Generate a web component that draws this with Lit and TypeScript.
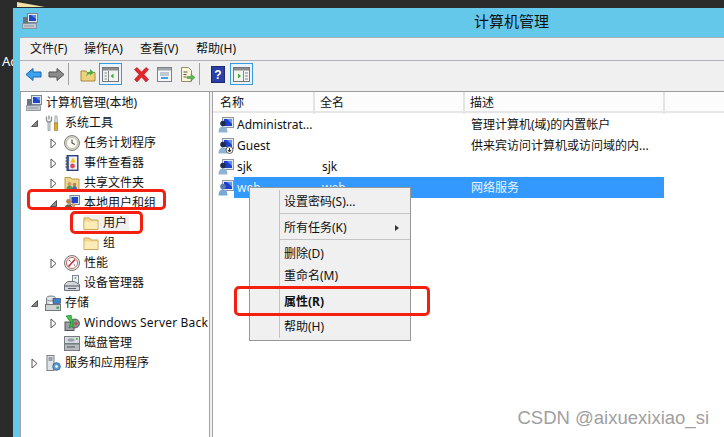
import { LitElement, html, css, svg } from "lit";
import { customElement } from "lit/decorators.js";

const folder = svg`<path d="M1 3h5.500l1.500 2h7v9.500H1z" fill="#f3d98e" stroke="#c9a85a"/><path d="M1.500 6.500h13v7.500h-13z" fill="#fbecb8"/>`;
const computer = svg`<rect x="5.500" y=".5" width="10" height="9" fill="#dfe6ee" stroke="#7c8794"/><rect x="7" y="2" width="7" height="6" fill="#1f45c8"/><path d="M9 2h5v4z" fill="#5f8cf0"/><rect x="1" y="4" width="5" height="8" fill="#6a7480"/><path d="M.5 10.500h14v5H.5z" fill="#c2c8cf" stroke="#7e8791" stroke-width=".8"/><path d="M2.500 13h10" stroke="#59616b" stroke-dasharray="1 1"/>`;
const ICONS: Record<string, unknown> = {
  computer,
  tools: svg`<path d="M4 .5v4M1.500 1.500v3c0 1.800 1 2.500 2.500 2.500s2.500-.7 2.500-2.500v-3" fill="none" stroke="#8a8f96" stroke-width="1.300"/><path d="M3 7h2v8.500H3z" fill="#dcdfe3" stroke="#7e848b" stroke-width=".7"/><path d="M10 1h2l.5 7h-3z" fill="#d9dde1" stroke="#868b92" stroke-width=".6"/><path d="M9.500 8h3v7.500h-3z" fill="#e3ad1e" stroke="#8f6a0f" stroke-width=".6"/>`,
  clock: svg`<circle cx="8" cy="8" r="7.500" fill="#d5d3c8" stroke="#85857a"/><circle cx="8" cy="8" r="5.500" fill="#fbfbf4" stroke="#a8a898" stroke-width=".6"/><path d="M8 4.500V8l2.800 1.400" fill="none" stroke="#4a4a44" stroke-width="1.100"/>`,
  event: svg`<rect x="3" y=".5" width="11" height="15" fill="#4b61a8" stroke="#2f3f78"/><rect x="5" y="1.500" width="8" height="13" fill="#eef0f5"/><path d="M9 2.500l3 5H6z" fill="#f0c41f"/><circle cx="8.500" cy="11" r="2.400" fill="#d9505a"/><path d="M3 3H1.500M3 6H1.500M3 9H1.500M3 12H1.500" stroke="#333"/>`,
  share: svg`<path d="M1 2.500h5.500l1 1.500H15v11H1z" fill="#f0d68a" stroke="#b69a50"/><circle cx="5.500" cy="9" r="2" fill="#c99a6b"/><path d="M2.500 14.500c0-3 1.500-3.900 3-3.900s3 .9 3 3.900z" fill="#4e9a5e"/><circle cx="10.500" cy="9.500" r="1.800" fill="#b98457"/><path d="M8 14.500c0-2.500 1.200-3.500 2.500-3.500s2.500 1 2.500 3.500z" fill="#4668a8"/>`,
  users: svg`<rect x="6" y=".5" width="9.500" height="9" fill="#dfe6ee" stroke="#7c8794"/><rect x="7.500" y="2" width="6.500" height="6" fill="#1f45c8"/><circle cx="4.500" cy="6.500" r="2.400" fill="#b5824f"/><path d="M.5 14c0-3.500 2-4.500 4-4.500s4 1 4 4.500z" fill="#6b5a3c"/><circle cx="9.500" cy="10" r="1.900" fill="#caa06f"/><path d="M6.500 15c0-2.500 1.400-3.200 3-3.200s3 .7 3 3.200z" fill="#7d8c55"/>`,
  folder,
  perf: svg`<circle cx="8" cy="8" r="7.500" fill="#eceae4" stroke="#77776f"/><circle cx="8" cy="8" r="5.500" fill="#fff" stroke="#a33" stroke-width=".7"/><path d="M4.500 11.500L11 4.500" stroke="#c4232b" stroke-width="1.500"/><path d="M5 5l1.500 1.500M11 10.500l-1.200-1" stroke="#444"/>`,
  device: svg`<rect x="8.500" y=".5" width="6" height="8" fill="#eef0f2" stroke="#7e8791"/><circle cx="11.500" cy="3" r="1" fill="#4b6"/><path d="M.5 9.500l3-3h7l5 3v6H.5z" fill="#d2d6da" stroke="#6d747c"/><path d="M.5 11h15" stroke="#4f565e"/><path d="M4 13.500h8" stroke="#596069"/>`,
  storage: svg`<ellipse cx="6" cy="3.500" rx="4.500" ry="2.500" fill="#dfe3e6" stroke="#7a8086"/><path d="M1.500 3.500v6c0 1 2 1.500 4.500 1.500" fill="#cdd2d6" stroke="#7a8086"/><rect x="8" y="3.500" width="7.500" height="5" fill="#3c84c8" stroke="#336"  stroke-width=".6"/><rect x=".5" y="9.500" width="15" height="6" fill="#ced2d5" stroke="#71777d"/><rect x="11.500" y="11.500" width="2.400" height="2.400" fill="#44a648"/>`,
  wsb: svg`<rect x="1" y="7" width="9" height="8.500" fill="#9ba1a6" stroke="#555"/><circle cx="11" cy="8.500" r="4.400" fill="#8f8f92" stroke="#555"/><circle cx="12" cy="8.500" r="1.600" fill="#c0504a"/><path d="M2 1c2 2 2 4 5 6l-2 6 4-2 0-6c-2-1-1-3-2-5z" fill="#3ec24a" stroke="#19792a" stroke-width=".6"/>`,
  disk: svg`<rect x=".5" y="1.500" width="15" height="7" fill="#d8dbde" stroke="#767c82"/><ellipse cx="7" cy="5" rx="3.500" ry="1.700" fill="#9aa1a8"/><rect x=".5" y="9" width="15" height="6.500" fill="#b7bbbf" stroke="#767c82"/><path d="M3 12h8" stroke="#555"/><rect x="12" y="3" width="1.600" height="1.600" fill="#4a4"/>`,
  services: svg`<rect x="2" y=".5" width="7" height="15" fill="#dfe2e6" stroke="#7b8188"/><path d="M3.500 3h4M3.500 5h4" stroke="#5b6168"/><circle cx="11.500" cy="11.500" r="3.800" fill="#5d9bd1" stroke="#3a6e9e"/><circle cx="11.500" cy="11.500" r="1.300" fill="#fff"/>`,
};
const userIcon = (guest = false, selected = false) => html`<svg class="ic" viewBox="0 0 16 16">
  <rect x="4.500" y=".5" width="11" height="10" fill="#e4e9ef" stroke="#8e98a3"/><rect x="6" y="2" width="8" height="7" fill="#1c3fd0"/><path d="M9 2h5v5z" fill="#6292f5"/>
  <circle cx="5" cy="6.500" r="2.800" fill="${selected ? "#5a7ab0" : "#1f2d4a"}"/><path d="M.5 15.500c0-4.500 2.200-6 4.500-6s4.500 1.500 4.500 6z" fill="${selected ? "#78a8d8" : "#8fb3d1"}"/>
  ${guest ? svg`<circle cx="11.500" cy="12" r="3.500" fill="#f4f4f4" stroke="#666"/><path d="M11.500 10v3M10 12l1.500 2 1.500-2" stroke="#222" fill="none"/>` : ""}
</svg>`;

const TREE: { level: number; icon: string; label: string; exp?: "open" | "closed"; sel?: boolean; wide?: boolean }[] = [
  { level: 0, icon: "computer", label: "计算机管理(本地)" },
  { level: 1, icon: "tools", label: "系统工具", exp: "open" },
  { level: 2, icon: "clock", label: "任务计划程序", exp: "closed" },
  { level: 2, icon: "event", label: "事件查看器", exp: "closed" },
  { level: 2, icon: "share", label: "共享文件夹", exp: "closed" },
  { level: 2, icon: "users", label: "本地用户和组", exp: "open" },
  { level: 3, icon: "folder", label: "用户", sel: true },
  { level: 3, icon: "folder", label: "组" },
  { level: 2, icon: "perf", label: "性能", exp: "closed" },
  { level: 2, icon: "device", label: "设备管理器" },
  { level: 1, icon: "storage", label: "存储", exp: "open" },
  { level: 2, icon: "wsb", label: "Windows Server Back", exp: "closed", wide: true },
  { level: 2, icon: "disk", label: "磁盘管理" },
  { level: 1, icon: "services", label: "服务和应用程序", exp: "closed" },
];
const USERS = [
  { name: "Administrat...", full: "", desc: "管理计算机(域)的内置帐户" },
  { name: "Guest", full: "", desc: "供来宾访问计算机或访问域的内...", guest: true },
  { name: "sjk", full: "sjk", desc: "" },
  { name: "web", full: "web", desc: "网络服务", sel: true },
];

@customElement("app-root")
export class AppRoot extends LitElement {
  static styles = css`
    :host { display: block; position: relative; width: 724px; height: 437px; overflow: hidden; background: #2b2b2b;
      font: 12px/16px "Noto Sans", "Noto Sans CJK SC", sans-serif; color: #111; }
    svg { display: block; flex: none; }
    .desk { position: absolute; left: 0; top: 0; }
    .desk-a { position: absolute; left: 2px; top: 53px; color: #fff; font-size: 13px; }
    .win { position: absolute; left: 13px; top: 8px; right: 0; bottom: 0; background: #63c8ea; display: flex; flex-direction: column; }
    .title { height: 29px; flex: none; display: flex; align-items: center; padding: 0 0 3px 9px; box-sizing: border-box; }
    .title span { margin-left: 436px; font-size: 15px; line-height: 20px; }
    .title .ic { width: 16px; height: 16px; }
    .client { flex: 1; margin-left: 7px; background: #f0f0f0; display: flex; flex-direction: column; min-height: 0; }
    .menu { height: 24px; flex: none; display: flex; padding-left: 10px; gap: 15px; align-items: center; border-top: 1px solid #a9adb5; border-bottom: 1px solid #b0b0b8; box-sizing: border-box; }
    .menu span { width: 41px; white-space: nowrap; }
    .menu span:first-child { width: 39px; }
    .tools { height: 31px; flex: none; display: flex; align-items: center; padding: 0 0 4px 5px; box-sizing: border-box; border-bottom: 1px solid #9a9a9a; }
    .tb { width: 17px; height: 17px; }
    .help { width: 14px; }
    .sep { width: 1px; height: 22px; background: #a0a0a0; margin: 0 11px 0 3px; }
    .ml6 { margin-left: 6px; }
    .btn { width: 23px; height: 22px; box-sizing: border-box; border: 1px solid #3a9bdc; background: #e8f3fb; display: flex; align-items: center; justify-content: center; }
    .b1 { margin: 0 11px 0 2px; }
    .b2 { margin-left: 5px; }
    .panes { flex: 1; display: flex; min-height: 0; gap: 2px; }
    .left { width: 190px; flex: none; box-sizing: border-box; background: #fff; border-left: 1px solid #a4a4a4; border-right: 1px solid #a4a4a4; overflow: hidden; padding-top: 1px; }
    .right { flex: 1; background: #fff; border-left: 1px solid #a4a4a4; min-width: 0; }
    .row { height: 20px; display: flex; align-items: center; white-space: nowrap; }
    .exp { width: 14px; height: 14px; flex: none; margin-right: 4px; display: flex; align-items: center; justify-content: center; }
    .ic { width: 16px; height: 16px; flex: none; }
    .item { display: flex; align-items: center; gap: 4px; }
    .item.sel { background: #f0f0f0; padding-right: 2px; }
    .wide { letter-spacing: .2px; }
    .head { display: grid; grid-template-columns: 100px 150px 200px; height: 21px; box-sizing: border-box; border-bottom: 2px solid #e6e6e6; background: #fcfcfc; padding-left: 2px; }
    .head span { padding-left: 5px; line-height: 22px; border-right: 2px solid #e4e4e4; }
    .list { padding-top: 1px; }
    .ur { height: 21px; display: flex; align-items: center; padding-left: 5px; width: 451px; box-sizing: border-box; }
    .cells { flex: 1; height: 21px; display: grid; grid-template-columns: 85px 149px 1fr; padding-left: 3px; align-items: center; white-space: nowrap; }
    .cells.sel { background: #3399ff; color: #eaf4ff; }
    .ctx { position: absolute; left: 249px; top: 187px; width: 162px; height: 154px; box-sizing: border-box; border: 1px solid #979797; background: #f0f0f0; padding: 3px 0 0 0; display: flex; flex-direction: column; }
    .ctx::before { content: ""; position: absolute; left: 29px; top: 2px; bottom: 2px; width: 1px; background: #c4c4c4; }
    .mi { height: 22px; flex: none; padding-left: 34px; display: flex; align-items: center; position: relative; }
    .mi.b { font-weight: 700; }
    .ms { height: 1px; flex: none; margin: 0 0 3px 30px; background: #c4c4c4; }
    .gap4 { height: 4px; flex: none; }
    .gap3 { height: 3px; flex: none; }
    .arrow { position: absolute; right: 11px; top: 8px; width: 0; height: 0; border-left: 4px solid #333; border-top: 3.5px solid transparent; border-bottom: 3.5px solid transparent; }
    .mark { position: absolute; box-sizing: border-box; border: 3px solid #f3200f; border-radius: 5px; pointer-events: none; }
    .m1 { left: 27px; top: 189px; width: 139px; height: 21px; }
    .m2 { left: 70px; top: 211px; width: 73px; height: 23px; }
    .m3 { left: 234px; top: 286px; width: 196px; height: 30px; }
    .wm { position: absolute; right: 15px; top: 407px; color: #a0a0a0; font: 18.5px/22px "Liberation Sans", Arial, sans-serif; white-space: nowrap; }
  `;

  private exp(kind?: "open" | "closed") {
    if (!kind) return html`<span class="exp"></span>`;
    return html`<span class="exp">${kind === "open"
      ? html`<svg width="9" height="9" viewBox="0 0 9 9"><path d="M7.500 1.500v6h-6z" fill="#8a8a8a" stroke="#555"/></svg>`
      : html`<svg width="9" height="11" viewBox="0 0 9 11"><path d="M2 1l5 4.500L2 10z" fill="#fff" stroke="#555"/></svg>`}</span>`;
  }

  render() {
    return html`
      <svg class="desk" width="50" height="8" viewBox="0 0 50 8"><path d="M17 2l28 5H17z" fill="#f0e2a8"/></svg>
      <span class="desk-a">Ad</span>
      <div class="win">
        <div class="title"><svg class="ic" viewBox="0 0 16 16">${computer}</svg><span>计算机管理</span></div>
        <div class="client">
          <div class="menu"><span>文件(F)</span><span>操作(A)</span><span>查看(V)</span><span>帮助(H)</span></div>
          <div class="tools">
            <svg class="tb" viewBox="0 0 17 17"><path d="M1 8.500L8 2.500v3.500h8v5H8v3.500z" fill="#3ea3ec" stroke="#1668b4"/></svg>
            <svg class="tb ml6" viewBox="0 0 17 17"><path d="M16 8.500L9 2.500v3.500H1v5h8v3.500z" fill="#8a8a8a" stroke="#555"/></svg>
            <div class="sep"></div>
            <svg class="tb" viewBox="0 0 17 17"><path d="M1 5h5l1 1.500h8V15H1z" fill="#f0d27c" stroke="#a98b3e"/><path d="M6 11c0-3 2-5 4-5.500V3l4 3.500-4 3V8c-2 0-3 1-4 3z" fill="#4eb04a"/></svg>
            <div class="btn b1"><svg width="17" height="15" viewBox="0 0 17 15"><rect x=".5" y=".5" width="16" height="14" fill="#f2f2f2" stroke="#777"/><rect x="1" y="1" width="15" height="2.500" fill="#8b8b8b"/><path d="M6.500 4v10" stroke="#888"/><path d="M2.500 6h2.500M2.500 9h2.500M2.500 12h2.500" stroke="#7b8a99"/><path d="M11.500 6.500v5l-3-2.500z" fill="#3faa3c"/></svg></div>
            <svg class="tb" viewBox="0 0 17 17"><path d="M1.500 3.500L4 1.500l4.500 4.500L13 1.500l2.500 2-4.500 5 4.500 5-2.500 2.500L8.500 11 4 16l-2.500-2.500 4.500-5z" fill="#e5252a" stroke="#a81f23" stroke-width=".6"/></svg>
            <svg class="tb ml6" viewBox="0 0 17 17"><rect x="1.500" y="1.500" width="14" height="14" fill="#f4f5f7" stroke="#7d8288"/><rect x="2" y="2" width="13" height="2.500" fill="#a0a5ab"/><path d="M4 7h9M4 9h9" stroke="#8a9bb0"/><rect x="5" y="11" width="7" height="2" fill="#3ea3ec"/></svg>
            <svg class="tb ml6" viewBox="0 0 17 17"><path d="M2.500 1.500h7l3 3v11h-10z" fill="#fbf7d8" stroke="#8d8d70"/><path d="M4.500 6h4M4.500 8.500h3M4.500 11h3" stroke="#555"/><path d="M8 10.500h4V8l4 3.500-4 3.500v-2.500H8z" fill="#62b65a" stroke="#3d8a38" stroke-width=".5"/></svg>
            <div class="sep"></div>
            <svg class="tb help" viewBox="0 0 14 17"><rect x=".5" y=".5" width="13" height="16" fill="#2b3fa6" stroke="#1c2a73"/><text x="7" y="13" font-size="12" font-weight="700" font-family="Liberation Sans" fill="#fff" text-anchor="middle">?</text></svg>
            <div class="btn b2"><svg width="17" height="15" viewBox="0 0 17 15"><rect x=".5" y=".5" width="16" height="14" fill="#f2f2f2" stroke="#777"/><rect x="1" y="1" width="15" height="2.500" fill="#8b8b8b"/><path d="M10.500 4v10" stroke="#888"/><path d="M12 6h3M12 9h3M12 12h3" stroke="#7b8a99"/><path d="M5 6.500v5l3-2.500z" fill="#3faa3c"/></svg></div>
          </div>
          <div class="panes">
            <div class="left">
              ${TREE.map((t) => html`<div class="row" style="padding-left:${t.level === 0 ? 5 : 19 * t.level - 13}px">
                ${t.level > 0 ? this.exp(t.exp) : ""}
                <span class="item ${t.sel ? "sel" : ""}"><svg class="ic" viewBox="0 0 16 16">${ICONS[t.icon]}</svg><span class="${t.wide ? "wide" : ""}">${t.label}</span></span>
              </div>`)}
            </div>
            <div class="right">
              <div class="head"><span>名称</span><span>全名</span><span>描述</span></div>
              <div class="list">
                ${USERS.map((u) => html`<div class="ur">${userIcon(!!u.guest, !!u.sel)}
                  <div class="cells ${u.sel ? "sel" : ""}"><span>${u.name}</span><span>${u.full}</span><span>${u.desc}</span></div>
                </div>`)}
              </div>
            </div>
          </div>
        </div>
      </div>
      <div class="ctx">
        <div class="mi">设置密码(S)...</div>
        <div class="ms"></div>
        <div class="mi">所有任务(K)<i class="arrow"></i></div>
        <div class="ms"></div>
        <div class="mi">删除(D)</div>
        <div class="mi">重命名(M)</div>
        <div class="gap4"></div>
        <div class="mi b">属性(R)</div>
        <div class="gap3"></div>
        <div class="mi">帮助(H)</div>
      </div>
      <div class="mark m1"></div><div class="mark m2"></div><div class="mark m3"></div>
      <div class="wm">CSDN @aixuexixiao_si</div>
    `;
  }
}
